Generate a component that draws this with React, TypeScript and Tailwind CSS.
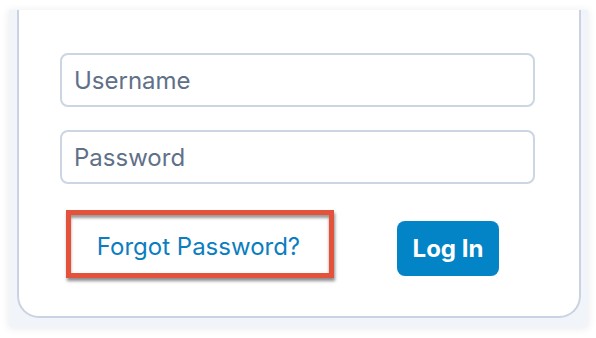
import React from "react";

export default function App() {
  return (
    <div className="w-[596px] h-[338px] bg-white pt-[10px] pl-[9px] overflow-hidden" style={{ fontFamily: "Inter, 'Noto Sans', sans-serif" }}>
      <div className="w-[579px] h-[317px] bg-[#f1f4f8] shadow-[0_1px_8px_rgba(30,41,59,0.10)] pl-[8px]">
        <div className="w-[564px] h-[308px] bg-white border-2 border-t-0 border-[#c9d3e1] rounded-b-[22px] pt-[43px] pl-[41px]">
          <div className="flex flex-col gap-[23px]">
            <input
              type="text"
              placeholder="Username"
              className="w-[475px] h-[54px] rounded-[8px] border-2 border-[#ccd5e2] px-[12px] text-[24px] text-[#334155] placeholder:text-[#617089] outline-none"
            />
            <input
              type="password"
              placeholder="Password"
              className="w-[475px] h-[54px] rounded-[8px] border-2 border-[#ccd5e2] px-[12px] text-[24px] text-[#334155] placeholder:text-[#617089] outline-none"
            />
          </div>
          <div className="flex items-start mt-[26px]">
            <div className="ml-[6px] w-[268px] h-[68px] border-[5px] border-[#e4523b] flex items-center justify-center pt-[5px] shadow-[1px_3px_3px_rgba(0,0,0,0.45),inset_0_3px_3px_rgba(0,0,0,0.4)]">
              <a href="#" className="text-[24px] text-[#0b7dc1] leading-none no-underline -ml-[3px]">
                Forgot Password?
              </a>
            </div>
            <button className="ml-[63px] mt-[11px] w-[102px] h-[55px] rounded-[8px] bg-[#0284c7] text-white text-[24px] font-bold leading-none">
              Log In
            </button>
          </div>
        </div>
      </div>
    </div>
  );
}
